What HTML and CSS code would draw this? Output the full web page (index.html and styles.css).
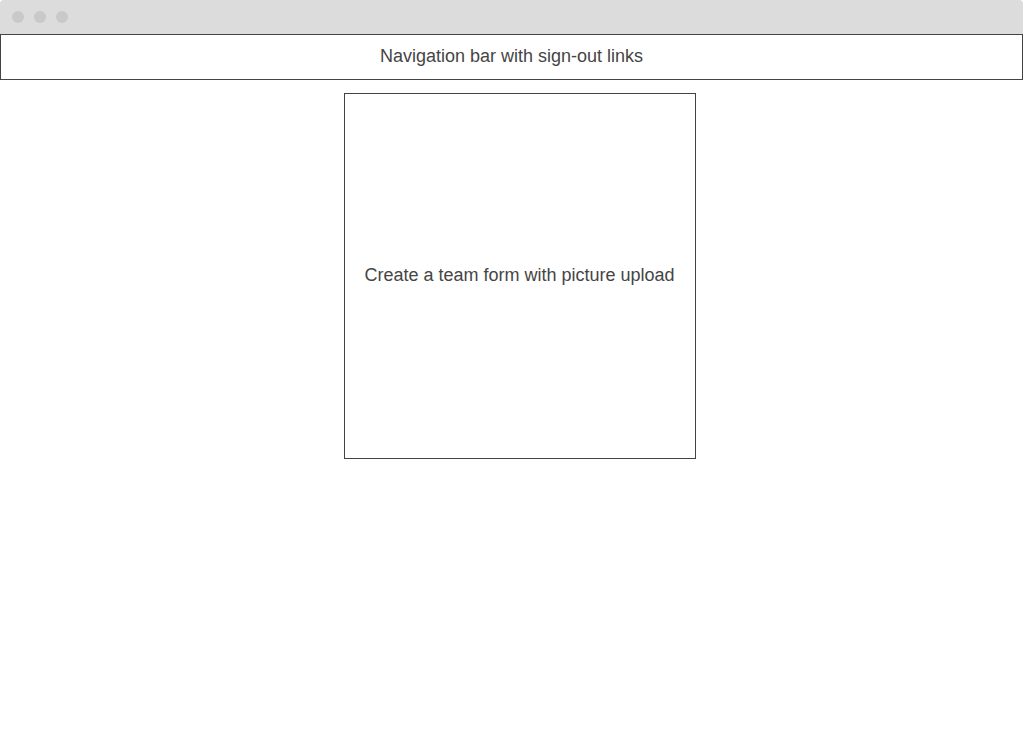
FILE: index.html
```html
<!DOCTYPE html>
<html>
<head>
<meta charset="utf-8">
<link rel="stylesheet" href="styles.css">
</head>
<body>
<div class="window">
  <div class="titlebar">
    <span class="dot"></span><span class="dot"></span><span class="dot"></span>
  </div>
  <div class="nav">Navigation bar with sign-out links</div>
  <div class="main">
    <div class="form-box">Create a team form with picture upload</div>
  </div>
</div>
</body>
</html>
```
FILE: styles.css
```css
html, body {
  margin: 0;
  padding: 0;
  background: #ffffff;
}
body {
  font-family: "Liberation Sans", Arial, sans-serif;
  color: #454545;
}
.window {
  width: 1023px;
  height: 756px;
  display: flex;
  flex-direction: column;
}
.titlebar {
  height: 34px;
  box-sizing: border-box;
  background: #dcdcdc;
  border-radius: 4px 4px 0 0;
  display: flex;
  align-items: center;
  gap: 10px;
  padding-left: 12px;
}
.dot {
  width: 12px;
  height: 12px;
  border-radius: 50%;
  background: #c9c9c9;
}
.nav {
  height: 46px;
  box-sizing: border-box;
  border: 1px solid #444444;
  display: flex;
  align-items: center;
  justify-content: center;
  padding-bottom: 2px;
  font-size: 18px;
}
.main {
  display: flex;
  justify-content: center;
  padding-top: 13px;
  padding-left: 16px;
}
.form-box {
  width: 352px;
  height: 366px;
  box-sizing: border-box;
  border: 1px solid #444444;
  display: flex;
  align-items: center;
  justify-content: center;
  padding-bottom: 2px;
  font-size: 18px;
}
```
